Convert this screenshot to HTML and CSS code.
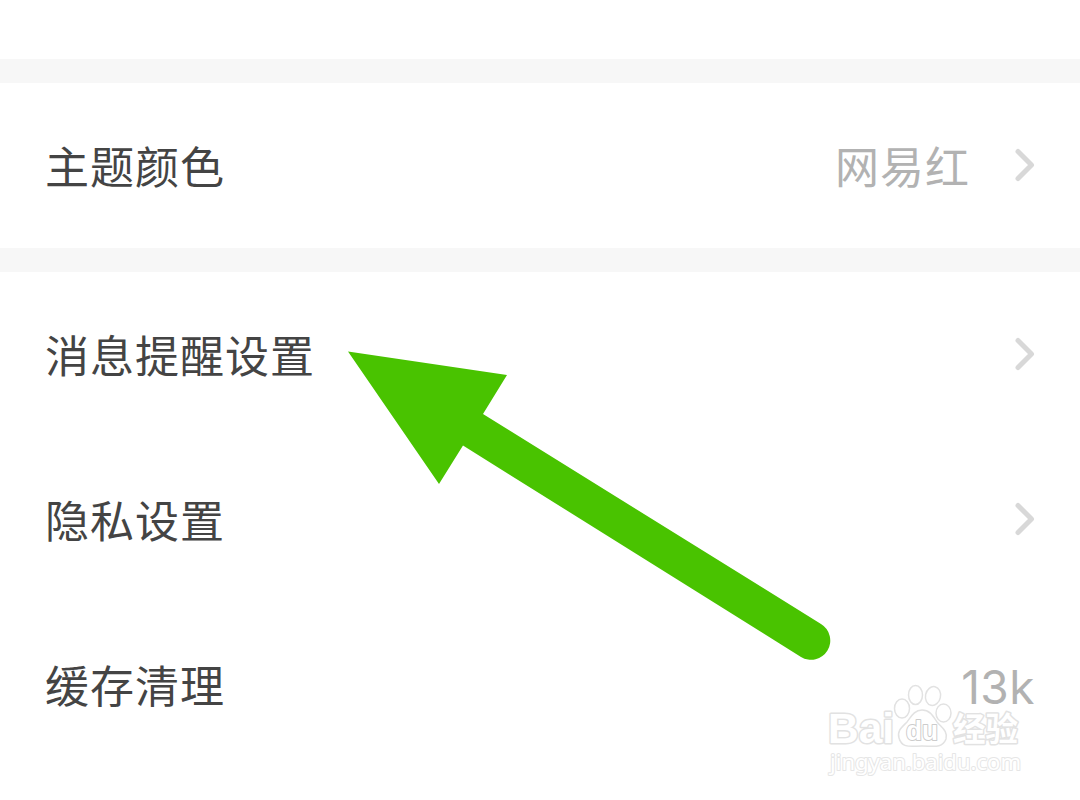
FILE: index.html
```html
<!DOCTYPE html>
<html lang="zh-CN">

<head>
    <meta charset="UTF-8">
    <title>设置</title>
    <link rel="stylesheet" href="styles.css">
</head>

<body>
    <div class="page">
        <div class="head"></div>
        <ul class="group">
            <li>
                <span class="name">主题颜色</span>
                <span class="value">网易红</span>
                <svg class="more" viewBox="0 0 20 34"><path d="M3 3.500L16.500 17L3 30.500"/></svg>
            </li>
        </ul>
        <ul class="group">
            <li>
                <span class="name">消息提醒设置</span>
                <svg class="more" viewBox="0 0 20 34"><path d="M3 3.500L16.500 17L3 30.500"/></svg>
            </li>
            <li>
                <span class="name">隐私设置</span>
                <svg class="more" viewBox="0 0 20 34"><path d="M3 3.500L16.500 17L3 30.500"/></svg>
            </li>
            <li>
                <span class="name">缓存清理</span>
                <span class="value size">13k</span>
            </li>
        </ul>

        <!-- 箭头 -->
        <svg class="arrow" viewBox="0 0 484 310">
            <path d="M0 0.500L159 24L135 63L473 273A18.700 18.700 0 0 1 453 306L115 94.500L91 133Z"/>
        </svg>

        <!-- 水印 -->
        <svg class="mark" viewBox="0 0 210 105">
            <text class="bai" x="8" y="63" textLength="66" lengthAdjust="spacingAndGlyphs">Bai</text>
            <ellipse cx="82" cy="28.500" rx="7.500" ry="9.500"/>
            <ellipse cx="95.500" cy="15" rx="7" ry="9.500"/>
            <ellipse cx="113" cy="16" rx="7.500" ry="9.500" transform="rotate(12 113 16)"/>
            <ellipse cx="123.500" cy="33" rx="7.500" ry="9"/>
            <path d="M102 30C94 30 91 37 87 42C81 48 77 51 79 58C82 69 92 66 102 66C113 66 122 69 126 59C128 51 122 48 117 42C113 36 110 30 102 30Z"/>
            <text class="du" x="86" y="60" textLength="32" lengthAdjust="spacingAndGlyphs">du</text>
            <text class="jy" x="133" y="61" textLength="65" lengthAdjust="spacingAndGlyphs">经验</text>
            <text class="url" x="10" y="90" textLength="191" lengthAdjust="spacingAndGlyphs">jingyan.baidu.com</text>
        </svg>
    </div>
</body>

</html>
```
FILE: styles.css
```css
* {
    margin: 0;
    padding: 0;
    box-sizing: border-box;
}

body {
    background: #fff;
    font-family: Inter, "Noto Sans CJK SC", sans-serif;
}

.page {
    position: relative;
    height: 800px;
    overflow: hidden;
}

.head {
    height: 59px;
}

.group {
    list-style: none;
    border-top: 24px solid #f7f7f7;
}

.group li {
    display: flex;
    align-items: center;
    height: 165px;
    padding: 0 45px;
}

.name {
    flex: 1;
    padding-bottom: 2px;
    font-family: "Noto Sans CJK SC", sans-serif;
    font-size: 44px;
    line-height: 64px;
    letter-spacing: 1px;
    color: #444;
}

.value {
    padding-bottom: 2px;
    font-family: "Noto Sans CJK SC", sans-serif;
    font-size: 44px;
    line-height: 64px;
    letter-spacing: 1px;
    color: #b2b2b2;
}

.size {
    padding: 4px 0 0;
    font-family: Inter, sans-serif;
    font-size: 46px;
    letter-spacing: 0.5px;
}

.more {
    width: 20px;
    height: 34px;
    margin: 0 0 2px 45px;
    fill: none;
    stroke: #d8d8d8;
    stroke-width: 5;
    stroke-linecap: round;
    stroke-linejoin: round;
}

.arrow {
    position: absolute;
    left: 348px;
    top: 351px;
    width: 484px;
    height: 310px;
    fill: #49c300;
}

.mark {
    position: absolute;
    left: 820px;
    top: 680px;
    width: 210px;
    height: 105px;
    fill: #fff;
}

.mark ellipse,
.mark path {
    stroke: #e2e2e2;
    stroke-width: 1.5;
}

.mark text {
    stroke: #e2e2e2;
    stroke-width: 3;
    stroke-linejoin: round;
    paint-order: stroke;
}

.bai {
    font: bold 43px "Liberation Sans", sans-serif;
}

.mark .du {
    font: bold 27px "Liberation Sans", sans-serif;
    stroke: #ccc;
    stroke-width: 2;
}

.jy {
    font: bold 33px "Noto Sans CJK SC", sans-serif;
}

.mark .url {
    font: 22px "Noto Sans", sans-serif;
    stroke: #e6e6e6;
    stroke-width: 2;
}
```
